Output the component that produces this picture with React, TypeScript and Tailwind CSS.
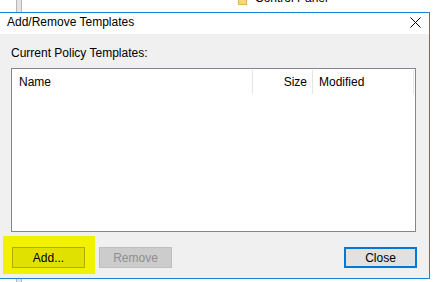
import React from "react";

function CloseGlyph() {
  return (
    <svg width="11" height="11" viewBox="0 0 11 11" className="shrink-0">
      <path d="M0.5 0.5 L10.5 10.5 M10.5 0.5 L0.5 10.5" stroke="#000" strokeWidth="1" fill="none" />
    </svg>
  );
}

function Folder() {
  return <div className="w-[9px] h-[14px] bg-[#f8d775] border border-[#d9b25a] shrink-0" />;
}

export default function App() {
  return (
    <div
      className="relative w-[435px] h-[282px] overflow-hidden bg-white text-[12px] text-black"
      style={{ fontFamily: '"Liberation Sans", Arial, sans-serif' }}
    >
      {/* what lies behind the dialog */}
      <div className="flex h-[282px]">
        <div className="ml-[16px] w-[6px] h-full bg-[#e4e4e4] border-x border-[#b8b8b8]" />
        <div className="ml-[216px] -mt-[9px] flex items-start gap-[8px] h-[15px]">
          <Folder />
          <span className="leading-[15px]">Control Panel</span>
        </div>
      </div>

      {/* dialog */}
      <div className="absolute top-[12px] left-0 w-[430px] h-[267px] border border-l-0 border-[#1883d7] flex flex-col">
        <div className="h-[21px] bg-white flex items-center justify-between pl-[7px] pr-[8px] shrink-0">
          <span className="leading-[15px] -mt-[3px]">Add/Remove Templates</span>
          <div className="-mt-[3px]">
            <CloseGlyph />
          </div>
        </div>

        <div className="flex-1 bg-[#f0f0f0] flex flex-col">
          <div className="pl-[11px] pt-[12px] leading-[15px]">Current Policy Templates:</div>

          <div className="ml-[11px] mt-[7px] w-[405px] h-[164px] bg-white border border-[#828790]">
            <div className="flex h-[25px] items-center">
              <div className="w-[241px] h-[24px] mt-[1px] border-r border-[#e5e5e5] pl-[7px] flex items-center">Name</div>
              <div className="w-[60px] h-[24px] mt-[1px] border-r border-[#e5e5e5] pr-[5px] flex items-center justify-end">Size</div>
              <div className="w-[101px] h-[24px] mt-[1px] border-r border-[#e5e5e5] pl-[6px] flex items-center">Modified</div>
            </div>
          </div>

          <div className="flex items-start mt-[4px]">
            <div className="ml-[3px] bg-[#f2f200] pl-[9px] pr-[10px] pt-[11px] pb-[6px]">
              <div className="w-[73px] h-[21px] bg-[#e1e100] border border-[#adad00] flex items-center justify-center">
                Add...
              </div>
            </div>
            <div className="ml-[4px] mt-[11px] w-[73px] h-[21px] bg-[#cccccc] border border-[#bfbfbf] text-[#8f8f8f] flex items-center justify-center">
              Remove
            </div>
            <div className="ml-auto mr-[12px] mt-[11px] w-[73px] h-[21px] bg-[#e1e1e1] border-2 border-[#0078d7] flex items-center justify-center">
              Close
            </div>
          </div>
        </div>
      </div>
    </div>
  );
}
